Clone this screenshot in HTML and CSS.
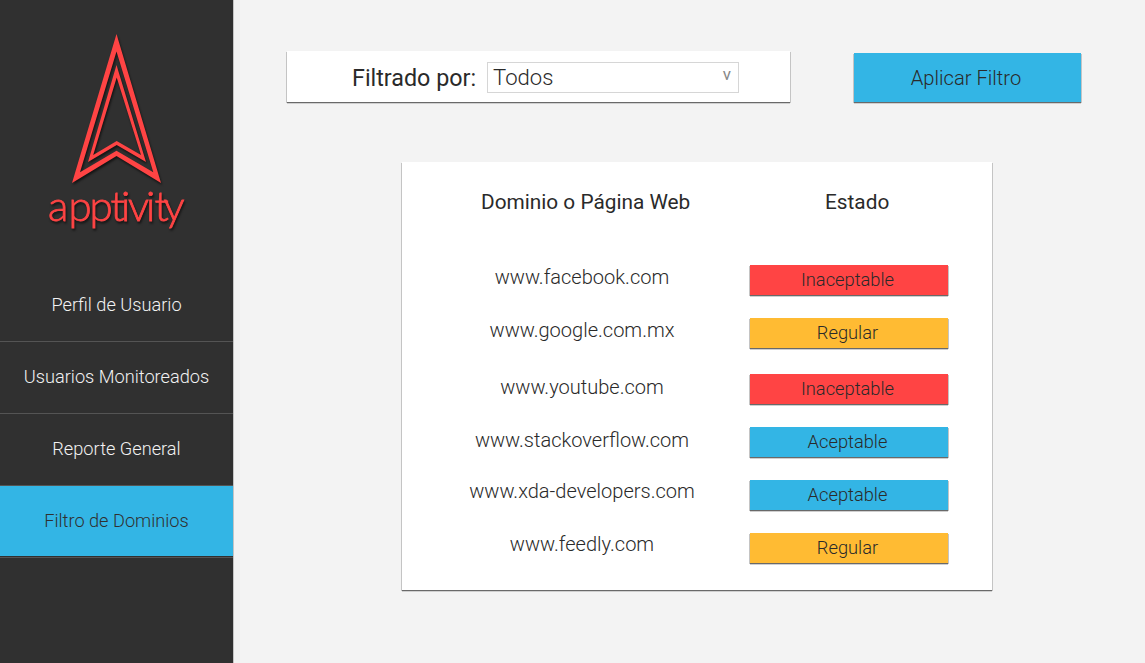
FILE: index.html
```html
<!DOCTYPE html>
<html lang="es">
<head>
<meta charset="utf-8">
<title>Apptivity - Filtro de Dominios</title>
<link rel="stylesheet" href="styles.css">
</head>
<body>
<div class="app">
  <aside class="sidebar">
    <svg class="logo" width="233" height="269" viewBox="0 0 233 269" role="img" aria-label="apptivity">
      <g class="logo-mark">
        <path fill-rule="evenodd" d="M116.5 34L161 183L116.5 156L72 183ZM116.5 51.5L80 172.3L116.5 150.8L153.3 172.3Z"/>
        <path fill-rule="evenodd" d="M116.5 65L146 162L116.7 145L88 162ZM116.7 77.5L93.2 155L116.7 141L141 155Z"/>
        <text class="logo-text" x="48 68.5 89.5 110.5 121 128 146 154.5 163.5" y="221">apptivity</text>
      </g>
    </svg>
    <nav class="nav">
      <a class="nav-item">Perfil de Usuario</a>
      <a class="nav-item">Usuarios Monitoreados</a>
      <a class="nav-item">Reporte General</a>
      <a class="nav-item nav-item-active">Filtro de Dominios</a>
    </nav>
  </aside>
  <main class="content">
    <div class="toolbar">
      <div class="filter raised">
        <span class="filter-label">Filtrado por:</span>
        <div class="select"><span>Todos</span><span class="select-arrow">v</span></div>
      </div>
      <div class="apply raised">Aplicar Filtro</div>
    </div>
    <section class="card raised">
      <div class="card-head"><h2 class="head-domain">Dominio o Página Web</h2><h2 class="head-state">Estado</h2></div>
      <div class="row"><span class="domain">www.facebook.com</span><span class="pill bad raised">Inaceptable</span></div>
      <div class="row row-tall"><span class="domain">www.google.com.mx</span><span class="pill fair raised">Regular</span></div>
      <div class="row"><span class="domain domain-low">www.youtube.com</span><span class="pill bad raised">Inaceptable</span></div>
      <div class="row"><span class="domain domain-low">www.stackoverflow.com</span><span class="pill good raised">Aceptable</span></div>
      <div class="row"><span class="domain domain-high">www.xda-developers.com</span><span class="pill good raised">Aceptable</span></div>
      <div class="row"><span class="domain domain-high">www.feedly.com</span><span class="pill fair raised">Regular</span></div>
    </section>
  </main>
</div>
</body>
</html>
```

FILE: styles.css
```css
* { box-sizing: border-box; }
body { margin: 0; font-family: Roboto, sans-serif; font-weight: 300; color: #2a2a2a; background: #f3f3f3; }
.app { display: flex; height: 663px; overflow: hidden; }
.sidebar { width: 233px; flex: none; background: #303030; box-shadow: 1px 0 0 #c4c4c4; }
.logo { display: block; }
.logo-mark { fill: #ff4444; filter: drop-shadow(1px 2px 1px rgba(0, 0, 0, .6)); }
.logo-text { font-family: Lato, sans-serif; font-weight: 300; font-size: 42px; stroke: #ff4444; stroke-width: .8px; }
.nav { display: flex; flex-direction: column; }
.nav-item { height: 72px; border-bottom: 1px solid #545454; font-size: 18.2px; line-height: 70px; text-align: center; color: #f2f2f2; }
.nav-item:first-child { height: 73px; padding-top: 1px; }
.nav-item-active { background: #33b5e5; color: #303030; box-shadow: inset 0 -1px #303030; }
.content { flex: 1; padding: 52px 0 0 54px; }
.raised { box-shadow: 0 1px 0 #696969, -1px 1px 0 #c4c4c4, 1px 1px 0 #c4c4c4, 0 2px 0 #cfcfcf; }
.toolbar { display: flex; gap: 64px; align-items: flex-start; margin-top: -1px; }
.filter { width: 503px; height: 51px; display: flex; padding: 11px 0 0 65px; background: #fff; }
.filter-label { width: 135px; font-size: 23.3px; font-weight: 400; line-height: 32px; }
.select { width: 252px; height: 31px; display: flex; justify-content: space-between; padding: 0 7px 0 5px; border: 1px solid #d6d6d6; font-size: 22.1px; line-height: 29px; }
.select-arrow { font-size: 17px; line-height: 23px; color: #888; font-weight: 400; }
.apply { width: 227px; height: 49px; margin-top: 2px; background: #33b5e5; font-size: 20.15px; line-height: 51px; text-align: center; padding-right: 3px; }
.card { width: 590px; height: 428px; margin: 60px 0 0 115px; background: #fff; }
.card-head { display: flex; height: 103px; padding: 28px 0 0 79px; }
.card-head h2 { margin: 0; font-size: 20.8px; font-weight: 400; line-height: 25px; }
.head-domain { width: 344px; }
.row { display: flex; height: 53px; align-items: flex-start; }
.row-tall { height: 56px; }
.domain { width: 348px; padding-left: 12px; text-align: center; font-size: 20.05px; line-height: 24px; }
.domain-low { line-height: 26px; }
.domain-high { line-height: 22px; }
.pill { width: 198px; height: 30px; padding-right: 3px; font-size: 18.3px; line-height: 30px; text-align: center; }
.bad { background: #ff4444; }
.fair { background: #ffbb33; }
.good { background: #33b5e5; }
```
